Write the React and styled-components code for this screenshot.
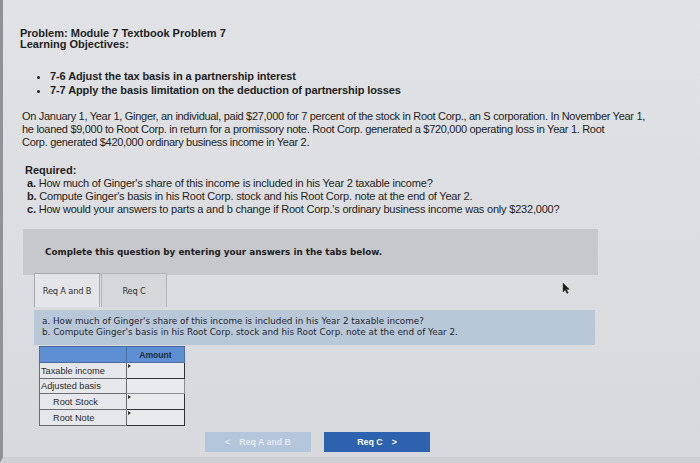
import React from "react";
import styled, { createGlobalStyle } from "styled-components";

const Global = createGlobalStyle`
  html, body { margin: 0; padding: 0; background: #dcdde0; }
  #root { width: 700px; height: 463px; overflow: hidden; }
`;

const Page = styled.div`
  box-sizing: border-box;
  width: 700px;
  height: 463px;
  background: linear-gradient(180deg, #e1e2e5 0%, #dcdde0 60%, #d8d9dc 100%);
  border-left: 3px solid #8f9297;
  border-bottom: 6px solid #cfd0d3;
  padding: 28px 0 0 17px;
  font-family: "Liberation Sans", Arial, sans-serif;
  color: #1d1e22;
  position: relative;
`;

const Title = styled.div`
  font-size: 11px;
  font-weight: 700;
  line-height: 11px;
`;

const Objectives = styled.ul`
  margin: 19px 0 0 0;
  padding: 0 0 0 30px;
  font-size: 11px;
  font-weight: 700;
  line-height: 14px;
  letter-spacing: -0.1px;
`;

const Paragraph = styled.div`
  margin: 13px 0 0 2px;
  font-size: 11px;
  line-height: 13px;
  letter-spacing: -0.3px;
  white-space: nowrap;
`;

const Required = styled.div`
  margin: 15px 0 0 5px;
  font-size: 11px;
  line-height: 13px;
  letter-spacing: -0.2px;
  white-space: nowrap;
`;

const ReqHead = styled.div`
  font-weight: 700;
  letter-spacing: 0;
`;

const Part = styled.div`
  padding-left: 2px;
  b { font-weight: 700; }
`;

const Banner = styled.div`
  margin: 13px 0 0 3px;
  width: 575px;
  height: 46px;
  box-sizing: border-box;
  background: #c7c8cc;
  padding: 0 0 0 22px;
  display: flex;
  align-items: center;
  font-family: "DejaVu Sans", Verdana, sans-serif;
  font-weight: 700;
  font-size: 8.8px;
  color: #222;
`;

const TabRow = styled.div`
  display: flex;
  margin: -2px 0 0 14px;
  height: 34px;
`;

const Tab = styled.div`
  box-sizing: border-box;
  width: 66px;
  height: 34px;
  border: 1px solid ${p => (p.$active ? "#a7a8ac" : "#b4b5b9")};
  border-bottom: none;
  background: ${p => (p.$active ? "#e4e5e8" : "#d6d7da")};
  display: flex;
  align-items: center;
  justify-content: center;
  font-family: "DejaVu Sans", Verdana, sans-serif;
  font-size: 8.3px;
  letter-spacing: -0.2px;
  color: #333;
  margin-right: 1px;
`;

const Instruction = styled.div`
  margin: 3px 0 0 14px;
  width: 561px;
  height: 35px;
  box-sizing: border-box;
  background: #b9c8d9;
  padding: 6px 0 0 8px;
  font-family: "DejaVu Sans", Verdana, sans-serif;
  font-size: 8.8px;
  line-height: 10.5px;
  color: #25272c;
  white-space: nowrap;
`;

const Table = styled.table`
  margin: 1px 0 0 19px;
  border-collapse: collapse;
  font-family: "Liberation Sans", Arial, sans-serif;
  font-size: 9.2px;
  color: #2a2b30;
  td, th {
    box-sizing: border-box;
    padding: 0;
  }
`;

const HeadCell = styled.th`
  background: #5d8fd2;
  border: 1px solid #4a6f9c;
  width: ${p => p.$w}px;
  height: 16px;
  font-weight: 700;
  color: #1f2b3d;
  font-size: 8.6px;
  text-align: center;
`;

const LabelCell = styled.td`
  background: #e6e7ea;
  border: 1px solid #6a6c72;
  width: 87px;
  height: ${p => p.$h || 16}px;
  padding-left: ${p => (p.$indent ? 13 : 1)}px !important;
  text-align: left;
`;

const InputCell = styled.td`
  background: #e9eaed;
  border: ${p => (p.$input ? "1.5px solid #2f3136" : "1px solid #8a8c92")};
  width: 58px;
  position: relative;
  &::before {
    content: "";
    display: ${p => (p.$input ? "block" : "none")};
    position: absolute;
    left: 1px;
    top: 1px;
    border-left: 3px solid #333;
    border-top: 2px solid transparent;
    border-bottom: 2px solid transparent;
  }
`;

const NavRow = styled.div`
  display: flex;
  gap: 13px;
  margin: 6px 0 0 185px;
`;

const NavButton = styled.div`
  box-sizing: border-box;
  width: 106px;
  height: 20px;
  display: flex;
  align-items: center;
  justify-content: center;
  gap: 9px;
  background: ${p => (p.$primary ? "#2c62ae" : "#b3c6dc")};
  color: ${p => (p.$primary ? "#ffffff" : "#e3e9f1")};
  font-family: "Liberation Sans", Arial, sans-serif;
  font-weight: 700;
  font-size: 8.8px;
`;

const Cursor = styled.svg`
  position: absolute;
  left: 559px;
  top: 282px;
`;

export default function App() {
  return (
    <>
      <Global />
      <Page>
        <Title>
          Problem: Module 7 Textbook Problem 7
          <br />
          Learning Objectives:
        </Title>
        <Objectives>
          <li>7-6 Adjust the tax basis in a partnership interest</li>
          <li>7-7 Apply the basis limitation on the deduction of partnership losses</li>
        </Objectives>
        <Paragraph>
          On January 1, Year 1, Ginger, an individual, paid $27,000 for 7 percent of the stock in Root Corp., an S corporation. In November Year 1,
          <br />
          he loaned $9,000 to Root Corp. in return for a promissory note. Root Corp. generated a $720,000 operating loss in Year 1. Root
          <br />
          Corp. generated $420,000 ordinary business income in Year 2.
        </Paragraph>
        <Required>
          <ReqHead>Required:</ReqHead>
          <Part><b>a.</b> How much of Ginger's share of this income is included in his Year 2 taxable income?</Part>
          <Part><b>b.</b> Compute Ginger's basis in his Root Corp. stock and his Root Corp. note at the end of Year 2.</Part>
          <Part><b>c.</b> How would your answers to parts a and b change if Root Corp.'s ordinary business income was only $232,000?</Part>
        </Required>
        <Banner>Complete this question by entering your answers in the tabs below.</Banner>
        <TabRow>
          <Tab $active>Req A and B</Tab>
          <Tab>Req C</Tab>
        </TabRow>
        <Instruction>
          a. How much of Ginger's share of this income is included in his Year 2 taxable income?
          <br />
          b. Compute Ginger's basis in his Root Corp. stock and his Root Corp. note at the end of Year 2.
        </Instruction>
        <Table>
          <thead>
            <tr>
              <HeadCell $w={87}></HeadCell>
              <HeadCell $w={58}>Amount</HeadCell>
            </tr>
          </thead>
          <tbody>
            <tr>
              <LabelCell>Taxable income</LabelCell>
              <InputCell $input />
            </tr>
            <tr>
              <LabelCell $h={15}>Adjusted basis</LabelCell>
              <InputCell />
            </tr>
            <tr>
              <LabelCell $indent>Root Stock</LabelCell>
              <InputCell $input />
            </tr>
            <tr>
              <LabelCell $indent>Root Note</LabelCell>
              <InputCell $input />
            </tr>
          </tbody>
        </Table>
        <NavRow>
          <NavButton>
            <span>&lt;</span>
            <span>Req A and B</span>
          </NavButton>
          <NavButton $primary>
            <span>Req C</span>
            <span>&gt;</span>
          </NavButton>
        </NavRow>
        <Cursor width="8" height="12" viewBox="0 0 8 12">
          <path d="M1 1 L1 10 L3.2 8 L5 11.5 L6.3 10.8 L4.6 7.4 L7.4 7.2 Z" fill="#1a1a1a" stroke="#444" strokeWidth="0.5" />
        </Cursor>
      </Page>
    </>
  );
}
